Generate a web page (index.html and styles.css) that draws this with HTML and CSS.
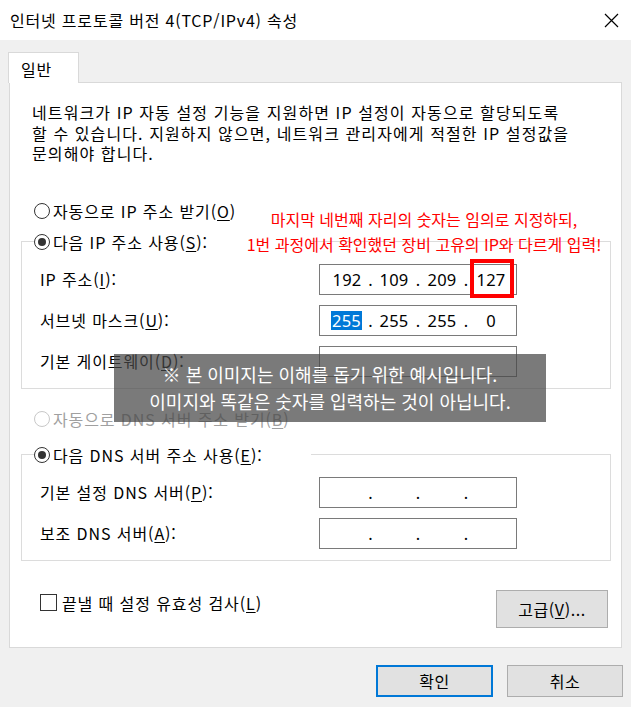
FILE: index.html
```html
<!DOCTYPE html>
<html lang="ko">
<head>
<meta charset="utf-8">
<title>인터넷 프로토콜 버전 4(TCP/IPv4) 속성</title>
<link rel="stylesheet" href="styles.css">
</head>
<body>
<div class="window">
  <header class="titlebar">
    <span class="title">인터넷 프로토콜 버전 4(TCP/IPv4) 속성</span>
    <svg class="close" width="15" height="15" viewBox="0 0 15 15"><path d="M1 1 L14 14 M14 1 L1 14" stroke="#000" stroke-width="1.2" fill="none"/></svg>
  </header>
  <div class="tabstrip"><div class="tab">일반</div></div>
  <main class="panel">
    <p class="desc">네트워크가 IP 자동 설정 기능을 지원하면 IP 설정이 자동으로 할당되도록<br>할 수 있습니다. 지원하지 않으면, 네트워크 관리자에게 적절한 IP 설정값을<br>문의해야 합니다.</p>
    <div class="option first"><span class="radio"></span><span>자동으로 IP 주소 받기(<u>O</u>)</span></div>
    <fieldset class="group">
      <legend><span class="radio checked"></span><span>다음 IP 주소 사용(<u>S</u>):</span></legend>
      <div class="field"><span class="label">IP 주소(<u>I</u>):</span>
        <div class="ipbox"><span>192</span><span>.</span><span>109</span><span>.</span><span>209</span><span>.</span><span>127</span><span class="mark"></span></div>
      </div>
      <div class="field"><span class="label">서브넷 마스크(<u>U</u>):</span>
        <div class="ipbox"><span><i class="sel">255</i></span><span>.</span><span>255</span><span>.</span><span>255</span><span>.</span><span>0</span></div>
      </div>
      <div class="field"><span class="label">기본 게이트웨이(<u>D</u>):</span>
        <div class="ipbox"></div>
      </div>
    </fieldset>
    <div class="option disabled"><span class="radio"></span><span>자동으로 DNS 서버 주소 받기(<u>B</u>)</span></div>
    <fieldset class="group dns">
      <legend><span class="radio checked"></span><span>다음 DNS 서버 주소 사용(<u>E</u>):</span></legend>
      <div class="field"><span class="label">기본 설정 DNS 서버(<u>P</u>):</span>
        <div class="ipbox"><span></span><span>.</span><span></span><span>.</span><span></span><span>.</span><span></span></div>
      </div>
      <div class="field"><span class="label">보조 DNS 서버(<u>A</u>):</span>
        <div class="ipbox"><span></span><span>.</span><span></span><span>.</span><span></span><span>.</span><span></span></div>
      </div>
    </fieldset>
    <div class="footer">
      <label class="check"><span class="box"></span><span>끝낼 때 설정 유효성 검사(<u>L</u>)</span></label>
      <button class="btn adv">고급(<u>V</u>)...</button>
    </div>
  </main>
  <div class="actions">
    <button class="btn ok">확인</button>
    <button class="btn">취소</button>
  </div>
  <div class="note">마지막 네번째 자리의 숫자는 임의로 지정하되,<br>1번 과정에서 확인했던 장비 고유의 IP와 다르게 입력!</div>
  <div class="overlay">※ 본 이미지는 이해를 돕기 위한 예시입니다.<br>이미지와 똑같은 숫자를 입력하는 것이 아닙니다.</div>
</div>
</body>
</html>
```

FILE: styles.css
```css
* { box-sizing: border-box; }
html, body { margin: 0; padding: 0; }
body {
  width: 631px;
  height: 707px;
  overflow: hidden;
  background: #f0f0f0;
  font-family: "Noto Sans CJK KR", sans-serif;
  font-size: 16px;
  letter-spacing: 0.9px;
  color: #000;
}
.window { position: relative; width: 631px; height: 707px; }
u { text-decoration: underline; text-underline-offset: 2px; text-decoration-thickness: 1px; }

.titlebar {
  height: 40px;
  background: #fff;
  display: flex;
  align-items: center;
  justify-content: space-between;
  padding: 0 12px 0 10px;
}
.title { font-size: 16px; line-height: 20px; letter-spacing: 0.8px; }
.close { display: block; }

.tabstrip { height: 42px; display: flex; align-items: flex-end; padding-left: 8px; }
.tab {
  position: relative;
  z-index: 1;
  width: 71px;
  height: 31px;
  margin-bottom: -1px;
  background: #fff;
  border: 1px solid #d9d9d9;
  border-bottom: none;
  padding: 6px 0 0 12px;
  font-size: 16px;
  line-height: 20px;
}

.panel {
  margin-left: 9px;
  width: 613px;
  height: 566px;
  background: #fff;
  border: 1px solid #d9d9d9;
  display: flex;
  flex-direction: column;
  padding: 0 10px 0 11px;
}
.desc {
  margin: 19px 0 0 11px;
  font-size: 16px;
  line-height: 20.5px;
  letter-spacing: 1.1px;
  white-space: nowrap;
}
.option {
  display: flex;
  align-items: center;
  gap: 3px;
  height: 20px;
  margin-left: 13px;
  line-height: 20px;
}
.option.first { margin-top: 37px; }
.option.disabled { margin-top: 20px; color: #a0a0a0; }
.option.disabled .radio { border-color: #c8c8c8; }

.radio {
  width: 16px;
  height: 16px;
  border: 1px solid #333;
  border-radius: 50%;
  background: #fff;
  display: inline-flex;
  align-items: center;
  justify-content: center;
  flex: none;
}
.radio.checked::after {
  content: "";
  width: 8px;
  height: 8px;
  border-radius: 50%;
  background: #333;
}

.group {
  margin: 11px 0 0 0;
  padding: 0 0 11px 0;
  border: 1px solid #dcdcdc;
  display: flex;
  flex-direction: column;
  gap: 10px;
}
.group.dns { margin-top: 16px; }
.group legend {
  margin-left: 12px;
  padding: 0;
  width: 277px;
  height: 20px;
  display: flex;
  align-items: center;
  gap: 3px;
  line-height: 20px;
  margin-bottom: 12px;
}
.field {
  display: flex;
  align-items: center;
  height: 31px;
  padding-left: 18px;
}
.label { width: 279px; line-height: 20px; }
.ipbox {
  position: relative;
  width: 198px;
  height: 31px;
  border: 1px solid #7a7a7a;
  background: #fff;
  display: grid;
  grid-template-columns: 38px 9px 38px 10px 38px 10px 40px;
  padding-left: 8px;
  align-items: center;
  font-family: "Noto Sans", "Noto Sans CJK KR", sans-serif;
  font-size: 16.5px;
  letter-spacing: 0.3px;
  line-height: 19px;
}
.ipbox span { text-align: center; }
.sel { font-style: normal; background: #0078d7; color: #fff; display: inline-block; width: 31px; margin-left: -1px; }
.mark {
  position: absolute;
  left: 150px;
  top: -6px;
  width: 44px;
  height: 39px;
  border: 4px solid #ff0000;
}

.footer {
  margin-top: 29px;
  display: flex;
  align-items: center;
  justify-content: space-between;
  padding: 0 3px 0 19px;
}
.check { display: flex; align-items: center; gap: 5px; line-height: 20px; margin-bottom: 12px; }
.box { width: 17px; height: 17px; border: 1px solid #333; background: #fff; }

.btn {
  font-family: "Noto Sans CJK KR", sans-serif;
  font-size: 16px;
  letter-spacing: 0.6px;
  line-height: 20px;
  color: #000;
  background: #e1e1e1;
  border: 1px solid #adadad;
  padding: 0;
}
.adv { width: 112px; height: 38px; }
.actions {
  display: flex;
  justify-content: flex-end;
  gap: 14px;
  padding: 17px 8px 0 0;
}
.actions .btn { width: 116px; height: 32px; }
.actions .ok { width: 117px; border: 2px solid #0078d7; }

.note {
  position: absolute;
  left: 236px;
  top: 207px;
  width: 376px;
  text-align: center;
  color: #ff0000;
  font-size: 16px;
  letter-spacing: 0;
  line-height: 25px;
}
.overlay {
  position: absolute;
  left: 114px;
  top: 354px;
  width: 432px;
  height: 68px;
  background: rgba(70, 70, 70, 0.72);
  color: #fff;
  text-align: center;
  font-size: 18px;
  letter-spacing: 0;
  line-height: 27px;
  padding-top: 7px;
}
```
